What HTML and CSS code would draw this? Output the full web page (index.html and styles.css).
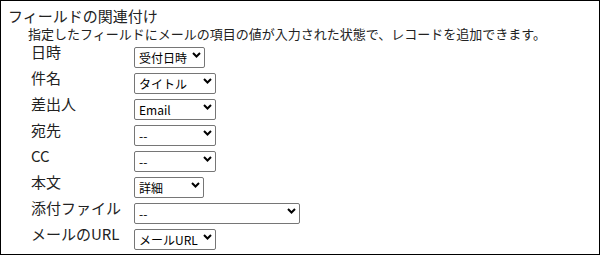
FILE: index.html
```html
<!DOCTYPE html>
<html lang="ja">
<head>
<meta charset="utf-8">
<link rel="stylesheet" href="styles.css">
</head>
<body>
<div class="box">
  <div class="title">フィールドの関連付け</div>
  <div class="desc">指定したフィールドにメールの項目の値が入力された状態で、レコードを追加できます。</div>
  <div class="grid">
    <div class="label">日時</div>
    <div class="sel w70"><select><option>受付日時</option></select><svg class="chev" width="9" height="6" viewBox="0 0 9 6"><path d="M1 1 L4.5 4.5 L8 1" fill="none" stroke="#000" stroke-width="2"/></svg></div>
    <div class="label">件名</div>
    <div class="sel w81"><select><option>タイトル</option></select><svg class="chev" width="9" height="6" viewBox="0 0 9 6"><path d="M1 1 L4.5 4.5 L8 1" fill="none" stroke="#000" stroke-width="2"/></svg></div>
    <div class="label">差出人</div>
    <div class="sel w81"><select><option>Email</option></select><svg class="chev" width="9" height="6" viewBox="0 0 9 6"><path d="M1 1 L4.5 4.5 L8 1" fill="none" stroke="#000" stroke-width="2"/></svg></div>
    <div class="label">宛先</div>
    <div class="sel w81"><select><option>--</option></select><svg class="chev" width="9" height="6" viewBox="0 0 9 6"><path d="M1 1 L4.5 4.5 L8 1" fill="none" stroke="#000" stroke-width="2"/></svg></div>
    <div class="label">CC</div>
    <div class="sel w81"><select><option>--</option></select><svg class="chev" width="9" height="6" viewBox="0 0 9 6"><path d="M1 1 L4.5 4.5 L8 1" fill="none" stroke="#000" stroke-width="2"/></svg></div>
    <div class="label">本文</div>
    <div class="sel w69"><select><option>詳細</option></select><svg class="chev" width="9" height="6" viewBox="0 0 9 6"><path d="M1 1 L4.5 4.5 L8 1" fill="none" stroke="#000" stroke-width="2"/></svg></div>
    <div class="label">添付ファイル</div>
    <div class="sel w165"><select><option>--</option></select><svg class="chev" width="9" height="6" viewBox="0 0 9 6"><path d="M1 1 L4.5 4.5 L8 1" fill="none" stroke="#000" stroke-width="2"/></svg></div>
    <div class="label">メールのURL</div>
    <div class="sel w81"><select><option>メールURL</option></select><svg class="chev" width="9" height="6" viewBox="0 0 9 6"><path d="M1 1 L4.5 4.5 L8 1" fill="none" stroke="#000" stroke-width="2"/></svg></div>
  </div>
</div>
</body>
</html>
```
FILE: styles.css
```css
html, body {
  margin: 0;
  padding: 0;
  background: #fff;
}
body {
  font-family: "Noto Sans CJK JP", "Noto Sans", sans-serif;
  color: #222;
}
.box {
  box-sizing: border-box;
  width: 600px;
  height: 255px;
  border: 1px solid #000;
  padding: 6px 0 0 7px;
}
.title {
  font-size: 15px;
  line-height: 18px;
  height: 19px;
}
.desc {
  font-size: 13px;
  line-height: 16px;
  padding-left: 20px;
  height: 18px;
}
.grid {
  display: grid;
  grid-template-columns: 104px auto;
  row-gap: 5px;
  padding-left: 22px;
  justify-items: start;
  align-items: start;
}
.label {
  font-size: 15px;
  line-height: 18px;
  padding-left: 1px;
  margin-top: -1px;
}
.sel {
  position: relative;
  height: 21px;
}
.sel select {
  appearance: none;
  -webkit-appearance: none;
  box-sizing: border-box;
  width: 100%;
  height: 21px;
  margin: 0;
  border: 1px solid #767676;
  border-radius: 2px;
  background: #fff;
  padding: 0 0 0 4px;
  font-family: "Noto Sans CJK JP", "Noto Sans", sans-serif;
  font-size: 12px;
  line-height: 19px;
  color: #000;
}
.chev {
  position: absolute;
  right: 4px;
  top: 8px;
  pointer-events: none;
}
.w70 { width: 71px; }
.w81 { width: 82px; }
.w69 { width: 70px; }
.w165 { width: 166px; }
```
